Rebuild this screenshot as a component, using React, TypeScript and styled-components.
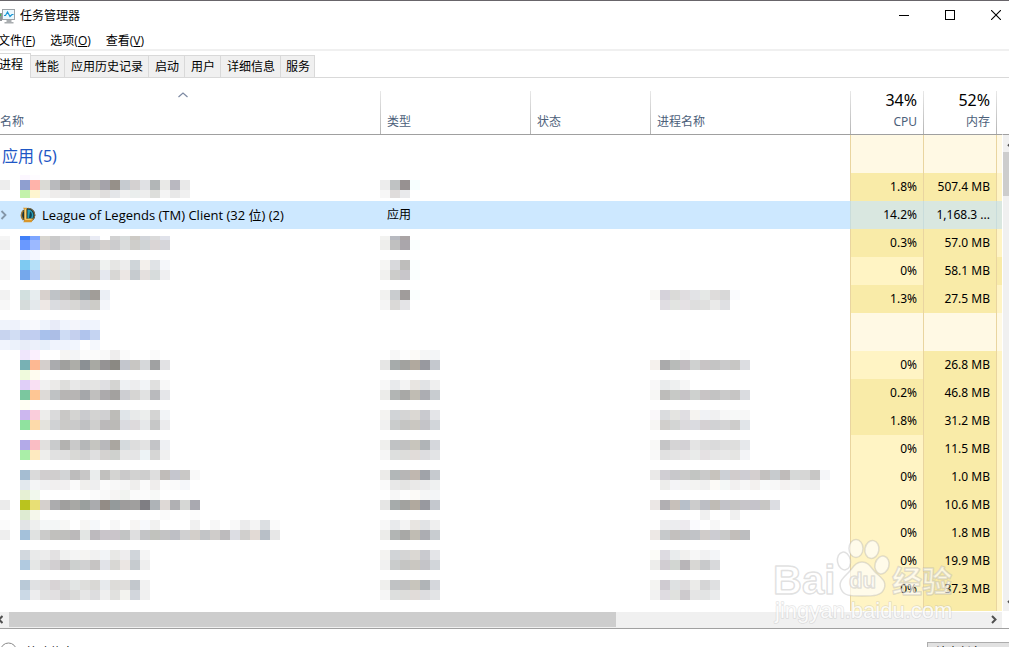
import React from 'react';
import styled, { createGlobalStyle, css } from 'styled-components';

const GlobalStyle = createGlobalStyle`
  *, *::before, *::after { box-sizing: border-box; }
  body {
    margin: 0;
    background: #fff;
    color: #000;
    font: 12px/16px "Noto Sans", "Noto Sans CJK SC", sans-serif;
    overflow: hidden;
  }
  button { font: inherit; color: inherit; margin: 0; padding: 0; border: 0; background: none; }
`;

const Window = styled.main`
  position: relative;
  display: flex;
  flex-direction: column;
  height: 100vh;
  overflow: hidden;
  border-top: 1px solid #68656a;
  & > * { flex-shrink: 0; }
`;

const TitleBar = styled.header`
  display: flex;
  align-items: center;
  height: 30px;
`;

const Title = styled.h1`
  flex: 1;
  margin: 0 0 0 4px;
  font-size: 12px;
  font-weight: 400;
`;

const CaptionButton = styled.button`
  display: flex;
  align-items: center;
  justify-content: center;
  width: 46px;
  height: 28px;
  margin-bottom: 2px;
  &:last-child { width: 36px; padding-left: 10px; }
`;

const MenuBar = styled.nav`
  display: flex;
  gap: 15px;
  height: 20px;
  padding-top: 1px;
  margin-left: -2px;
  border-bottom: 2px solid #f0f0f0;
`;

const MenuItem = styled.button`
  font-family: "Open Sans", "Noto Sans CJK SC", sans-serif;
  white-space: nowrap;
`;

const TabStrip = styled.div`
  display: flex;
  align-items: flex-end;
  height: 27px;
  box-shadow: inset 0 -1px #d9d9d9;
`;

const Tab = styled.button<{ $active?: boolean }>`
  height: 23px;
  padding: 0 5px 0 6px;
  border: 1px solid #d9d9d9;
  border-left: 0;
  background: #f0f0f0;
  white-space: nowrap;
  &:last-child { padding: 0 4px 0 5px; }
  ${p => p.$active && css`
    position: relative;
    height: 25px;
    margin-right: -2px;
    padding: 0 7px 3px 0;
    margin-left: -1px;
    border-bottom: 0;
    background: #fff;
  `}
`;

const Content = styled.div`
  display: flex;
`;

const Table = styled.table`
  flex: 1;
  width: 100%;
  min-width: 0;
  table-layout: fixed;
  border-spacing: 0;
`;

const HeadCell = styled.th<{ $divider?: boolean; $right?: boolean }>`
  height: 57px;
  padding: 11px 6px 2px 7px;
  border-bottom: 1px solid #a0a0a0;
  font-weight: 400;
  color: #4c607a;
  vertical-align: bottom;
  white-space: nowrap;
  text-align: ${p => (p.$right ? 'right' : 'left')};
  ${p => p.$divider && css`
    background: linear-gradient(#e8e8e8, #b4b4b4) left bottom / 1px 43px no-repeat;
  `}
  &:first-child { padding-left: 0; }
  &:last-child { padding: 0; }
`;

const Total = styled.div`
  height: 22px;
  font-size: 16px;
  line-height: 20px;
  color: #000;
`;

const Caret = styled.div`
  display: flex;
  justify-content: center;
  height: 22px;
  padding: 2px 9px 0 0;
`;

const Label = styled.div`
  height: 20px;
  line-height: 20px;
`;

const heat = { none: '#fff9e4', low: '#fff4c4', mid: '#f9eba8' };
type Heat = keyof typeof heat;

const Cell = styled.td`
  position: relative;
  padding: 0 6px 0 7px;
  white-space: nowrap;
`;

const NameCell = styled(Cell)`
  padding: 0;
`;

const HeatCell = styled(Cell)<{ $heat: Heat }>`
  border-left: 1px solid #e9d5a0;
  background: ${p => heat[p.$heat]};
  text-align: right;
  &:last-child { padding: 0; }
`;

const Row = styled.tr<{ $selected?: boolean }>`
  height: 28px;
  ${p => p.$selected && css`
    background: #cde8ff;
    ${HeatCell} { background: #d9e7e0; border-color: #c9dcdb; }
  `}
`;

const GroupRow = styled.tr`
  height: 38px;
`;

const EndRow = styled.tr`
  height: 8px;
`;

const GroupTitle = styled.h2`
  margin: 4px 0 0 2px;
  font-size: 16px;
  line-height: 20px;
  font-weight: 400;
  color: #1e57c5;
`;

const ProcessName = styled.span`
  display: flex;
  align-items: center;
  font-family: "Open Sans", "Noto Sans CJK SC", sans-serif;
  font-size: 13px;
`;

const ProcessIcon = styled.svg`
  margin: 0 6px 0 12px;
`;

const MosaicArt = styled.svg`
  position: absolute;
  top: 0;
  left: 0;
  z-index: 1;
  pointer-events: none;
`;

const ScrollColumn = styled.div`
  width: 7px;
  display: flex;
  flex-direction: column;
  overflow: hidden;
  padding-top: 56px;
`;

const VerticalTrack = styled.div`
  flex: 1;
  display: flex;
  flex-direction: column;
  width: 18px;
  border-left: 1px solid #fff;
  border-top: 1px solid #a0a0a0;
  background: #f0f0f0;
`;

const ArrowButton = styled.button`
  display: flex;
  align-items: center;
  justify-content: center;
  height: 17px;
`;

const VerticalThumb = styled.div`
  height: 44px;
  margin-bottom: auto;
  background: #cdcdcd;
`;

const HorizontalTrack = styled.div`
  display: flex;
  height: 16px;
  margin: 1px 7px 0 0;
  background: #f0f0f0;
`;

const HorizontalThumb = styled.div`
  flex: 607;
  height: 15px;
  background: #cdcdcd;
`;

const TrackRest = styled.div`
  flex: 369;
`;

const SideArrow = styled(ArrowButton)<{ $first?: boolean }>`
  width: ${p => (p.$first ? 9 : 17)}px;
  height: 15px;
  justify-content: ${p => (p.$first ? 'flex-end' : 'center')};
  padding-right: ${p => (p.$first ? 6 : 0)}px;
  svg { flex: none; }
`;

const Footer = styled.footer`
  display: flex;
  justify-content: space-between;
  border-top: 1px solid #a0a0a0;
  padding-top: 13px;
`;

const DetailsButton = styled.button`
  display: flex;
  gap: 9px;
  line-height: 22px;
`;

const EndTaskButton = styled.button`
  width: 82px;
  height: 24px;
  border: 1px solid #adadad;
  border-right: 0;
  background: #e1e1e1;
  text-align: left;
  padding: 0 0 2px 7px;
`;

const Watermark = styled.svg`
  position: absolute;
  right: 49px;
  bottom: 19px;
  pointer-events: none;
`;

type Strip = [x: number, y: number, colors: string, height?: number];

const nameStrips: Strip[] = [
  [20, 40, 'fcf7ff fefcff', 5],
  [0, 45, 'ededed - 8f9fd0 ffb3aa dadad5 b9babd a6a5a4 b7b6b6 a0a1a7 b5b5b0 a5a3aa 969089 c6cbd0 d4d1d1 e0e1e4 b2b6b7 e9e9e7 b9b8c0 e9e9e9'],
  [20, 55, 'c3f2ab fef5cf f3f3f3 eeeceb ececec e4e4e3 e2e2e2 e8e8e6 e0dedd e4e6e9 f0f0f0 eaeeed ededed dddedb f4f4f4 e8e8e8 f0f0f0', 8],
  [0, 101, 'f5f5f5 - 4180f8 7ea6ff d8d6d0 cacaca d5d5d8 dadada d2d4d4 e9ebf4 - d2d2d2 d8dcdc cdcac5 d2d5da dadada e0e2ea', 4],
  [0, 105, 'f0f0f0 - 6a99ff 9cb9ff d5d0ce c8c8ca dadada e0dcd8 bcbdc0 cacaca d4d0ce ccccce dadcdc cfcecb d0d4d6 dad5d5 d6d6da'],
  [20, 115, 'eaf0ff f4f7ff'],
  [0, 125, 'f6f6f6 - 7ecaf2 b6e0f8 e6e4e2 e5e2dc e0e5e8 e0dcda d0d6dc d6d7d6 eff2f0 e6e6e4 ededed cfd5d9 f3f0ec e0e3e6 f5f7fa'],
  [0, 135, 'f5f5f5 - 75a8ec b0caf5 e0e0de e4e0db dae2e3 dad8d4 d2d5da cdc9c3 e5e8ef d8d7d5 ece7e4 c6cbcf e4e0de d7dcdc efeff1'],
  [0, 155, 'f2f2f2 - d2e0df e7edef d8d1cd bfc3c7 c0bebd b4b3af a0a6aa a19d98 ebeff5'],
  [0, 165, 'f8f8f8 - d6dcdb e4e9ec eee8e5 dadce0 dad9da d8d7d5 cdced0 cdccc8 f4f6fa'],
  [0, 185, 'eff3fb eef2fb f5f8fd f8f9fd eef3fc e8ebf8 f0f4fd f4f5fb eff3fd f0f4fd'],
  [0, 195, 'c8d4ef d1ddf3 c0ceef c1cef0 a8c1ec acbee6 cedcf4 c5d0ee b0c4ed c5d4f2'],
  [0, 205, 'f1f4fd ecf2fb e8edf8 ecf0fa e7effa f0f3fd eff3fd f2f6fe - f5f8fd'],
  [20, 215, 'efe6fc fbf0fe - - f6f5f3 f3f4f6 fbfbfb fbfbfa f9f9f9 eeeded fafafa - - fafafa'],
  [20, 225, '78b1b4 fdb892 d4cfcc aaabae a0a09e adada8 8b9094 a8a9a3 959394 8b8983 c3c6cd c8c6c3 d6d8da a0a1a2 e2e2e4'],
  [20, 235, 'effadc fffcf0'],
  [20, 245, 'e0cff8 f9e0f3 f1f1f1 ebeae8 dededc e8e8e8 e3e3e3 e4e4e3 dfdfe2 d4d4d2 eef1f3 ededee f2f4f7 e0e0df f8f8f8'],
  [20, 255, '7bc79f fec694 dddad7 bfc2c4 b7b5b4 b7b5b4 a5a7aa c0bfbe acaaac a3a19f cdced2 d6d5d3 e1e2e2 b9babd e5e6e9'],
  [20, 265, 'fffff3'],
  [20, 275, 'ccb7ef facddb ededeb dadadb c9c8c6 d4d4d2 cacbce d3d3d2 d0d0d2 bdbcb8 e0e5e9 e8eaea eceeed d4d4d3 f2f4f7'],
  [20, 285, '90e29f fddaaa e4e3dd d0d2d4 cbcac8 cacaca c0c1c3 cfcfce bbb9ba bbbab7 dadbe0 dddadc e6e8ea c6c7c7 ebebed'],
  [20, 305, 'b3aae8 fabdc4 e1e0de c9cbcc b3b2b0 c9c9c9 b5b7b8 c5c5c0 b8b8bb aaa6a0 d5dadd dddddd e3e3e3 c3c4c7 eef0f3'],
  [20, 315, 'aaeea8 feeac0 eeeeec e1e1e1 e0e0e0 d9d9d6 d4d4d4 dfdfe0 d4d2d0 cfd1ce e7e7e7 e5e5e6 edf3f6 d6d6d5 f0f0f0'],
  [20, 335, 'a5bdd2 dadada d1cecf d0cece d2d4d6 bdbcbc c8c7c7 eaeded c1c0be d4d4d2 cac9ca d2d2d1 cecece dedede c0bcb9 c5c6ce c9c8c6 f9f9f9'],
  [20, 345, 'e3e9ee f4f5f6 f1f1f2 f1efef f2f0f1 fafafa f0efed eeeeef fbfbfb f8f8f8 f6f6f6 efeeed fafafa efedec fcfcfc fafafa f5f7fa'],
  [20, 355, 'e6f0d4 f1f8ed - - - - - fbfbfb f9f9f9 f6f4f3 f1f3f0 fafafa fbfbfb f7f9f7'],
  [0, 365, 'ebebeb - bac31e e8df75 d5d0cd acacae a09f9e a8a8a5 9a9f9e aaabae 938c86 949a9b 9e9c9c a09f9e 7f7e83 aeb3b7 ded9d6 b0b0b3 d6d7d5 a9a9b0'],
  [20, 375, 'deebd2 f5f7eb - - - - - - - - - - - - fafafa - - fcfcfc'],
  [0, 385, 'fbfbfb - e2e4e6 eeefee f4f7f7 f3f6f6 f7f7f5 - f7f6f4 f5f8fa - f7f7f7 - f7f5f3 f7f9fc f1f1f0 - - - f0f0f0 - f7f7f7 - f9f9f9 ebebec f4f4f4 dcdfe2 fafafa'],
  [0, 395, 'eeeeee - a4c1da e0e2e1 cbcbca c1c0bd bfbfbd bbb9ba e3e6e4 bdbabe c9c5ca cac5ca c2c4c4 dfdfe0 c3c4c6 c1c2bd c3c3c4 bebfc5 d0d0d1 d3cfca c2c4c6 cfccca bdbbbd dcdde3 d0cfcd e2dad5 b8bfc7 e7e7e7'],
  [20, 415, 'd2d8de e9eaea ececec e3e1e2 f0f1f0 f4f4f4 f5f4f2 f1f1f1 f2f4f7 e8e8e6 eeedee d0d5da f5f5f5'],
  [20, 425, 'b1cae0 e5e7e6 d8d8d9 d2cfd1 c2c0c1 cdd0cf d1d1d2 c6c4c3 e1e3e8 d8d7d4 ebe6e3 c6cbcf eeeeee'],
  [20, 445, 'b9c9d7 e0e1e3 dfdfe0 d8d3d5 dadada e2e5e4 dededc d9d8d5 e7eaed dddcd9 dfdddb c2c7cc f2f2f2'],
  [20, 455, 'cbd9e6 ededee e2e2e2 e2e0e1 d5d3d4 dadad9 e6e6e6 dddddf efefef e1e1df f3f3ef d2d6dc f0f0f0'],
];

const typeStrips: Strip[] = [
  [0, 45, 'ededed bfc2c3 979191 f7ffff'],
  [0, 55, 'f7f7f7 dfdcdb e9eaec', 8],
  [0, 101, 'f2f2f0 b8bac0 aaa4a5', 4],
  [0, 105, 'eeeeec c0c0c0 aaa6ab fafffe'],
  [0, 125, 'f6f6f4 d8d9dc bebdbb fbffff'],
  [0, 135, 'f1f1ef ccccca c8c6ca fafffe'],
  [0, 155, 'f2f2f0 c9cccf a09c9b fafffe'],
  [0, 165, 'f5f5f5 dad9d7 e4e4e7'],
  ...[0, 140].flatMap((dy): Strip[] => [
    [10, 215 + dy, 'f7f7f7 fdfdfd fcfaf7 f5f6f6 f3f5f7'],
    [0, 225 + dy, 'e6e6e5 a6abab a2a29f b1a99e 98999f c4c8ce'],
    [0, 245 + dy, 'f8f8f8 e8eaec f3f3f3 e8e5e1 e1e3e5 efefef'],
    [0, 255 + dy, 'ececea b2b5b4 a8a8a6 c0bcb3 acadb2 c8ccd0'],
    [0, 275 + dy, 'f4f3f1 d1d4d7 d5d5d5 dbd8d3 c9cacf e4e5e8'],
    [0, 285 + dy, 'f1f1f1 cacccc c5c5c3 cac7c1 c4c4c8 d2d6da'],
    [0, 305 + dy, 'efefed c0c2c4 c1c1c1 c8c5bc b0b4b7 d5d7dc'],
    [0, 315 + dy, 'f6f6f6 dddfde dddddb e1dcd9 dddde0 e3e4e6'],
  ]),
  [0, 335, 'ecebe9 b2b7b8 b7b6b6 c0b7af a0a3a9 c6cacf'],
  [0, 345, 'fafafa e8e8e8 e4e4e3 eae9e8 ebebec eff1f1'],
];

const processStrips: Strip[] = [
  [0, 155, 'f9f8f5 d5d2da dadad8 e0dde0 e2e3e6 e5e8e6 dedcdb d8d8d8 fafbfe'],
  [10, 165, 'e0dde2 e2e4e1 e5e1e4 dedede e0e0df eaeae9 dfe0e3'],
  [30, 215, 'fafafa'],
  [0, 225, 'f5f1ed aaaaab b8bbb9 c2bdc1 cfd1d0 c8c4c5 c4c4c4 cacacb c7c6c4 dcdde1'],
  [0, 245, 'f9f8f9 e9ebec eef0f0 f6f6f6'],
  [0, 255, 'f7f7f5 bdbcba c7c9c6 c6c3c6 ced1cf c8c4c5 c3c3c3 cacaca c6c5c4 dadce0'],
  [0, 275, 'faf8fa dadcde e4e4e1 e0dee2 f5f3f0 f0f2f5 f0f0f1 f7f7f7 f7f9f8 f7f7f7'],
  [0, 285, 'f7f6f4 d1cfcc d3d5d4 dcdadd dadbe0 d5d1d3 d1d2d4 d4d4d5 cdcccb e1e5e9'],
  [0, 305, 'f9f9f7 c5c5c6 d5d4d5 d3d1d5 e4e4e4 dddddd dadadb dedede dededd e6e8eb'],
  [0, 315, 'f9f9f9 e1e1e1 e4e4e4 e8e6e7 e9ebea e5e1e3 e7e7e7 e8e8e8 e5e5e3 f3f4f7'],
  [0, 335, 'eae9e8 d0ced3 c8c8cb cacac9 c2c5c2 cacaca c7c3bd ccd0d6 d1cccc cecdd3 d4cfcf c3c1bf c7cbce bfbbba d6d8d7 d6d6d5 c7c6c5 f5f6f9'],
  [10, 345, 'ededeb f4f4f7 f3f3f3 f3f3f2 f0f0f0 fcfaf7 f4f8f7 f2f0f0 f7f7f7 f3f1ef f9fafa f8f8f8 f4f2f1 f5f5f5 f1f1f1 f0f0f0'],
  [0, 365, 'ebe7e5 b1afb2 c7c0ba b7bfc9 cccccc bcbec4 bfbbb5 c2c2c8 c5c4c3 c7c5c9 c5c3ca c7c6c4 dcdde2'],
  [50, 375, 'f0f0f0 - - f0f0f0'],
  [10, 385, 'ededee ecedef edeaee fafafe - f7f7f7'],
  [0, 395, 'ede8e5 c6c9cb c3c0be c1c2c4 c1c3c7 d0ccca ccccd2 c9cac9 c2beba bcbdbf'],
  [0, 415, 'fcfcf8 dddbe1 e9eced f1f0ee f7f7f7 f1f1f2 f3f5f8'],
  [0, 425, 'ededeb d1cdd2 d2d6d2 b8b5b8 d8d7d4 c8c9cb d8d9db'],
  [0, 445, 'f4f4f2 cfcbd1 dee1e2 dedcdd ebebe9 d5d5d6 dfe0e1'],
  [0, 455, 'f2f2f2 dfdce1 e0e1de cdcacd e5e5e5 e3e4e4 eaebec'],
];

function Mosaic({ strips, width }: { strips: Strip[]; width: number }) {
  return (
    <MosaicArt width={width} height={470} shapeRendering="crispEdges" aria-hidden="true">
      {strips.flatMap(([x, y, colors, height = 10]) =>
        colors.split(' ').map((c, i) =>
          c === '-' ? null : (
            <rect key={`${x}-${y}-${i}`} x={x + i * 10} y={y} width={10} height={height} fill={`#${c}`} />
          ),
        ),
      )}
    </MosaicArt>
  );
}

interface Process {
  cpu: string;
  memory: string;
  cpuHeat: Heat;
  diskHeat?: Heat;
  name?: string;
  type?: string;
}

const apps: Process[] = [
  { cpu: '1.8%', memory: '507.4 MB', cpuHeat: 'mid' },
  { cpu: '14.2%', memory: '1,168.3 ...', cpuHeat: 'mid', name: 'League of Legends (TM) Client (32 位) (2)', type: '应用' },
  { cpu: '0.3%', memory: '57.0 MB', cpuHeat: 'mid' },
  { cpu: '0%', memory: '58.1 MB', cpuHeat: 'low', diskHeat: 'mid' },
  { cpu: '1.3%', memory: '27.5 MB', cpuHeat: 'mid' },
];

const background: Process[] = [
  { cpu: '0%', memory: '26.8 MB', cpuHeat: 'low' },
  { cpu: '0.2%', memory: '46.8 MB', cpuHeat: 'mid' },
  { cpu: '1.8%', memory: '31.2 MB', cpuHeat: 'mid' },
  { cpu: '0%', memory: '11.5 MB', cpuHeat: 'low' },
  { cpu: '0%', memory: '1.0 MB', cpuHeat: 'low' },
  { cpu: '0%', memory: '10.6 MB', cpuHeat: 'low' },
  { cpu: '0%', memory: '1.8 MB', cpuHeat: 'low' },
  { cpu: '0%', memory: '19.9 MB', cpuHeat: 'low' },
  { cpu: '0%', memory: '37.3 MB', cpuHeat: 'low' },
];

function LeagueIcon() {
  return (
    <ProcessIcon width="16" height="16" viewBox="0 0 16 16" aria-hidden="true">
      <circle cx="8.3" cy="8" r="7" fill="#17333c" />
      <path d="M7.500 2.500a5.600 5.600 0 0 1 4.500 9.200H7.500z" fill="#2a9fb4" />
      <path d="M10 4.500c2 1 2.500 4 1 6.500H9z" fill="#0c4459" />
      <path d="M8 1.200a6.800 6.800 0 0 1 5.600 10.600" fill="none" stroke="#8a6f3c" strokeWidth="1" />
      <path d="M3.300 3.500C.7 6 .7 10.300 3.300 12.800" fill="none" stroke="#a07a38" strokeWidth="1.600" />
      <path d="M3 .8h4.500l-.8 1.400v9.300h7l-2.200 3.700H3.200l1-1.800V2.500z" fill="#d9962a" />
      <path d="M4.700 1.700h1.100v10.800H4.700z" fill="#fbe08c" />
      <path d="M5 12.500h6.500" stroke="#f3c766" />
    </ProcessIcon>
  );
}

function ProcessRow({ p }: { p: Process }) {
  return (
    <Row $selected={!!p.name}>
      <NameCell>
        {p.name && (
          <ProcessName>
            <svg width="8" height="10" viewBox="0 0 8 10" aria-hidden="true">
              <path d="M1.500 1 5.500 5 1.500 9" fill="none" stroke="#8496a8" strokeWidth="1.800" />
            </svg>
            <LeagueIcon />
            {p.name}
          </ProcessName>
        )}
      </NameCell>
      <Cell>{p.type}</Cell>
      <Cell />
      <Cell />
      <HeatCell $heat={p.cpuHeat}>{p.cpu}</HeatCell>
      <HeatCell $heat="mid">{p.memory}</HeatCell>
      <HeatCell $heat={p.diskHeat ?? 'low'} />
    </Row>
  );
}

function HeatBlanks({ heats }: { heats: Heat[] }) {
  return <>{heats.map((h, i) => <HeatCell key={i} $heat={h} />)}</>;
}

const menus = [['文件', 'F'], ['选项', 'O'], ['查看', 'V']];
const tabs = ['进程', '性能', '应用历史记录', '启动', '用户', '详细信息', '服务'];

export default function App() {
  return (
    <Window>
      <GlobalStyle />
      <TitleBar>
        <svg width="16" height="16" viewBox="0 0 16 16" aria-hidden="true">
          <path d="M0 5h2v8H0z" fill="#8f9498" />
          <path d="M0 6h1v2H0z" fill="#41b649" />
          <path d="M6.500 12h5v2h2v1.500h-9V14h2z" fill="#a9adb0" />
          <rect x="2.500" y="1.500" width="12" height="10" fill="#eaf7fd" stroke="#9ea3a7" />
          <path d="M4 7.500h1.500L7.500 4l2.500 4.500L12 6.500h1.500" fill="none" stroke="#1796d4" strokeWidth="1.200" />
        </svg>
        <Title>任务管理器</Title>
        <CaptionButton aria-label="最小化">
          <svg width="10" height="10" shapeRendering="crispEdges"><path d="M0 5.500h10" stroke="#000" /></svg>
        </CaptionButton>
        <CaptionButton aria-label="最大化">
          <svg width="10" height="10" shapeRendering="crispEdges"><rect x=".5" y=".5" width="9" height="9" fill="none" stroke="#000" /></svg>
        </CaptionButton>
        <CaptionButton aria-label="关闭">
          <svg width="10" height="10"><path d="M0 0 10 10M10 0 0 10" stroke="#000" strokeWidth="1.100" /></svg>
        </CaptionButton>
      </TitleBar>
      <MenuBar>
        {menus.map(([label, key]) => (
          <MenuItem key={key}>{label}(<u>{key}</u>)</MenuItem>
        ))}
      </MenuBar>
      <TabStrip role="tablist">
        {tabs.map((t, i) => (
          <Tab key={t} role="tab" aria-selected={i === 0} $active={i === 0}>{t}</Tab>
        ))}
      </TabStrip>
      <Content>
        <Table>
          <colgroup>
            <col />
            <col width="150" />
            <col width="120" />
            <col width="200" />
            <col width="73" />
            <col width="73" />
            <col width="6" />
          </colgroup>
          <thead>
            <tr>
              <HeadCell>
                <Caret>
                  <svg width="10" height="6" aria-hidden="true"><path d="M.5 5 5 1l4.500 4" fill="none" stroke="#7d8aa3" strokeWidth="1.200" /></svg>
                </Caret>
                <Label>名称</Label>
              </HeadCell>
              <HeadCell $divider><Label>类型</Label></HeadCell>
              <HeadCell $divider><Label>状态</Label></HeadCell>
              <HeadCell $divider><Label>进程名称</Label></HeadCell>
              <HeadCell $divider $right><Total>34%</Total><Label>CPU</Label></HeadCell>
              <HeadCell $divider $right><Total>52%</Total><Label>内存</Label></HeadCell>
              <HeadCell $divider />
            </tr>
          </thead>
          <tbody>
            <GroupRow>
              <NameCell>
                <GroupTitle>应用 (5)</GroupTitle>
                <Mosaic strips={nameStrips} width={300} />
              </NameCell>
              <Cell><Mosaic strips={typeStrips} width={60} /></Cell>
              <Cell />
              <Cell><Mosaic strips={processStrips} width={180} /></Cell>
              <HeatBlanks heats={['none', 'none', 'none']} />
            </GroupRow>
            {apps.map(p => <ProcessRow key={p.memory} p={p} />)}
            <GroupRow>
              <Cell colSpan={4} />
              <HeatBlanks heats={['none', 'none', 'none']} />
            </GroupRow>
            {background.map(p => <ProcessRow key={p.memory} p={p} />)}
            <EndRow>
              <Cell colSpan={4} />
              <HeatBlanks heats={['low', 'mid', 'low']} />
            </EndRow>
          </tbody>
        </Table>
        <ScrollColumn>
          <VerticalTrack>
            <ArrowButton aria-label="向上滚动">
              <svg width="9" height="6"><path d="M1 5 4.500 1.500 8 5" fill="none" stroke="#505050" strokeWidth="2" /></svg>
            </ArrowButton>
            <VerticalThumb />
            <ArrowButton aria-label="向下滚动">
              <svg width="9" height="6"><path d="M1 1 4.500 4.500 8 1" fill="none" stroke="#505050" strokeWidth="2" /></svg>
            </ArrowButton>
          </VerticalTrack>
        </ScrollColumn>
      </Content>
      <HorizontalTrack>
        <SideArrow $first aria-label="向左滚动">
          <svg width="6" height="9"><path d="M5.500 1 2 4.500 5.500 8" fill="none" stroke="#505050" strokeWidth="2" /></svg>
        </SideArrow>
        <HorizontalThumb />
        <TrackRest />
        <SideArrow aria-label="向右滚动">
          <svg width="6" height="9"><path d="M1 1 4.500 4.500 1 8" fill="none" stroke="#505050" strokeWidth="2" /></svg>
        </SideArrow>
      </HorizontalTrack>
      <Footer>
        <DetailsButton>
          <svg width="17" height="18" aria-hidden="true">
            <circle cx="8.500" cy="9" r="8" fill="#fff" stroke="#8a8a8a" />
            <path d="M5 11l3.500-4 3.500 4" fill="none" stroke="#444" />
          </svg>
          简略信息(D)
        </DetailsButton>
        <EndTaskButton>结束任务(E)</EndTaskButton>
      </Footer>
      <Watermark width="190" height="90" viewBox="0 0 190 90" aria-hidden="true">
        <g fill="#fff" fillOpacity=".65" stroke="#a8a8a8" strokeOpacity=".35" strokeWidth="1.500" strokeLinejoin="round" fontFamily='"Liberation Sans", "Noto Sans CJK SC", sans-serif'>
          <text x="3" y="56" fontSize="40" fontWeight="700">Bai</text>
          <ellipse cx="74" cy="23" rx="6.500" ry="9" transform="rotate(-10 74 23)" />
          <ellipse cx="86" cy="10.500" rx="7" ry="9" />
          <ellipse cx="102" cy="11.500" rx="7" ry="9" transform="rotate(10 102 11)" />
          <ellipse cx="112" cy="27" rx="7" ry="9" transform="rotate(15 112 27)" />
          <path d="M92 24c7 0 9 6 14 11 6 5 11 9 8 16-3 7-10 7-22 7s-18 0-21-7c-3-7 2-11 7-16 5-5 7-11 14-11z" />
          <text x="79" y="50" fontSize="22" fontWeight="700">du</text>
          <text x="122" y="54" fontSize="30" fontWeight="700">经验</text>
          <text x="5" y="80" fontSize="22" fillOpacity=".85" paintOrder="stroke" strokeOpacity=".3">jingyan.baidu.com</text>
        </g>
      </Watermark>
    </Window>
  );
}
